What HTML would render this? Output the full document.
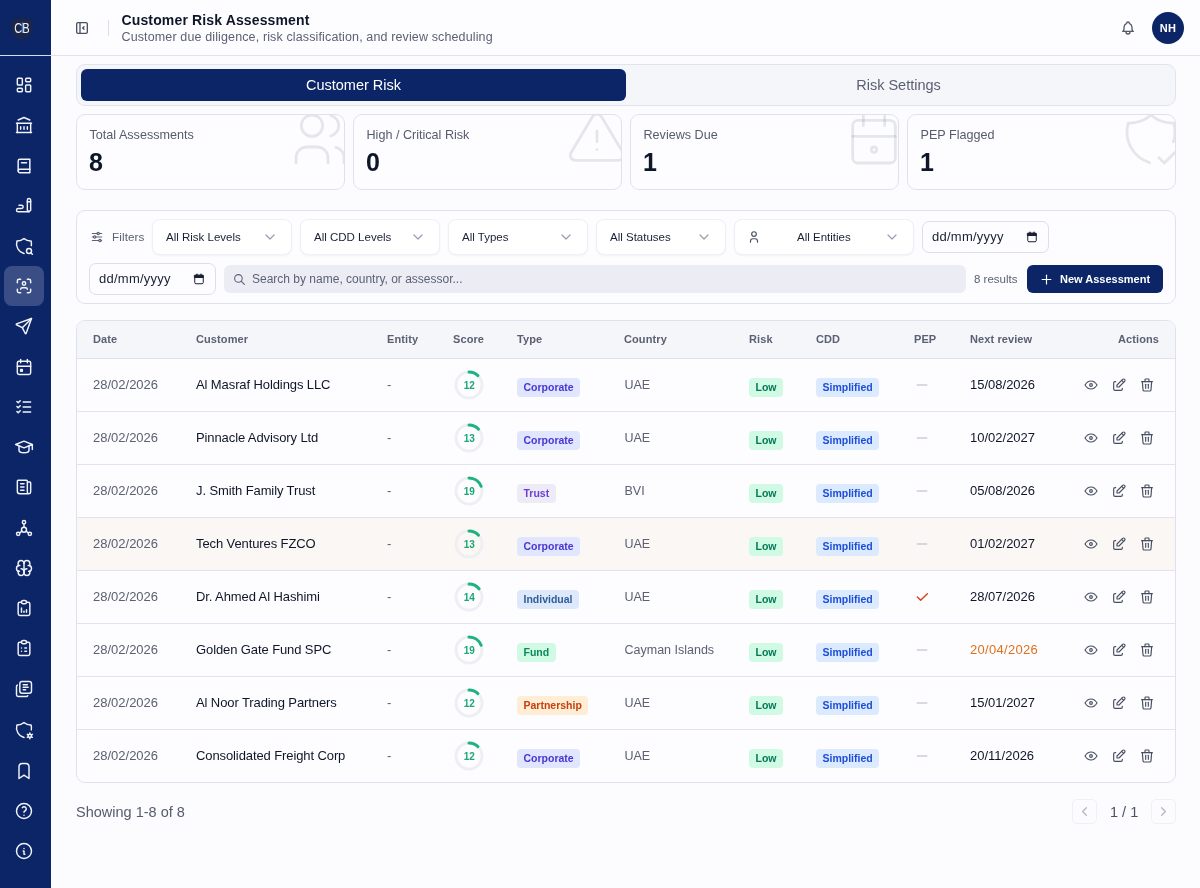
<!DOCTYPE html>
<html lang="en">
<head>
<meta charset="utf-8">
<title>Customer Risk Assessment</title>
<style>
*{box-sizing:border-box;margin:0;padding:0}
html,body{width:1200px;height:888px;overflow:hidden}
body{position:relative;background:#fcfcfe;font-family:"Liberation Sans",sans-serif;color:#0f1629;-webkit-font-smoothing:antialiased}
#app{position:absolute;left:0;top:0;width:1200px;height:888px;will-change:transform}
svg{display:block}
.ico{fill:none;stroke:currentColor;stroke-width:2;stroke-linecap:round;stroke-linejoin:round}
.abs{position:absolute}

/* ---------- sidebar ---------- */
#sidebar{position:absolute;left:0;top:0;width:51px;height:888px;background:#0b2567}
#sidebar .logo{position:absolute;left:0;top:0;width:51px;height:56px;border-bottom:1px solid #d5dbea}
#sidebar .nav{position:absolute;left:4px;width:40px;height:40px;border-radius:8px;color:#f1f3f9;display:flex;align-items:center;justify-content:center}
#sidebar .nav svg{width:20px;height:20px;stroke-width:1.750}
#sidebar .nav.active{background:#3b4d85}

/* ---------- header ---------- */
#header{position:absolute;left:51px;top:0;width:1149px;height:56px;background:#fdfdff;border-bottom:1px solid #dfe3ee}
#header .toggle{position:absolute;left:23px;top:20px;width:16px;height:16px;color:#4a5163}
#header .sep{position:absolute;left:57px;top:20px;width:1px;height:16px;background:#dcdfe8}
#header h1{position:absolute;left:70.5px;top:11px;font-size:14px;line-height:18px;font-weight:700;color:#0f1629;white-space:nowrap;letter-spacing:.14px}
#header p{position:absolute;left:70.5px;top:28.5px;font-size:12.5px;line-height:16px;color:#5b6275;white-space:nowrap;letter-spacing:.13px}
#header .bell{position:absolute;left:1069px;top:20px;width:16px;height:16px;color:#535a6b}
#header .avatar{position:absolute;left:1101px;top:12px;width:32px;height:32px;border-radius:50%;background:#0b2567;color:#fff;font-size:11px;font-weight:700;text-align:center;line-height:32px;letter-spacing:.3px}

/* ---------- tabs ---------- */
#tabs{position:absolute;left:76px;top:64px;width:1100px;height:42px;background:#f5f6fa;border:1px solid #e1e4ee;border-radius:9px}
#tabs .tab{position:absolute;top:4px;height:32px;border-radius:6px;font-size:14.5px;line-height:32px;text-align:center;color:#5a6074;font-weight:400}
#tabs .tab.on{left:4px;width:545px;background:#0b2567;color:#fff}
#tabs .tab.off{left:549px;width:545px}

/* ---------- stat cards ---------- */
.stat{position:absolute;top:114px;width:269px;height:76px;background:#fdfdff;border:1px solid #dfe2ec;border-radius:9px;overflow:hidden}
.stat .lbl{position:absolute;left:12.5px;top:12px;font-size:12.6px;line-height:16px;color:#565c6e;white-space:nowrap}
.stat .val{position:absolute;left:12px;top:31.800px;font-size:25px;line-height:30px;font-weight:700;color:#0f1629}
.stat svg{position:absolute;right:-8px;top:-8px;width:64px;height:64px;color:rgba(91,98,117,.15);stroke-width:1.050}

/* ---------- filters ---------- */
#filters{position:absolute;left:76px;top:210px;width:1100px;height:94px;background:#fdfdff;border:1px solid #dfe2ec;border-radius:9px}
#filters .ficon{position:absolute;left:13px;top:19px;width:14px;height:14px;color:#5b6275}
#filters .flabel{position:absolute;left:35px;top:19px;font-size:11.7px;letter-spacing:.1px;line-height:14px;color:#5b6275}
.sel{position:absolute;top:8px;height:36px;background:#fff;border:1px solid #eef0f6;border-radius:8px;box-shadow:0 1px 2px rgba(20,30,70,.05);font-size:11.5px;line-height:34px;color:#1a2033;padding-left:13px;white-space:nowrap}
.sel svg.chev{position:absolute;right:13px;top:9px;width:16px;height:16px;color:#9a9fae;stroke-width:1.8}
.sel svg.usr{position:absolute;left:12px;top:10px;width:14px;height:14px;color:#4a5163}
.date{position:absolute;width:127px;height:32px;background:#fdfdff;border:1px solid #dcdfea;border-radius:7px;font-size:13px;line-height:30px;color:#1a2033;padding-left:9px;letter-spacing:.25px;white-space:nowrap}
.date svg{position:absolute;right:10.500px;top:8.500px;width:12px;height:12px;color:#1a2033;stroke-width:2.400}
#search{position:absolute;left:147px;top:54px;width:742px;height:28px;background:#ecedf4;border-radius:6px;font-size:12px;line-height:28px;color:#5b6275;padding-left:28px;white-space:nowrap}
#search svg{position:absolute;left:9px;top:8px;width:13px;height:13px;color:#5b6275}
#results{position:absolute;left:897px;top:61px;font-size:11.5px;line-height:14px;color:#5b6275;white-space:nowrap}
#newbtn{position:absolute;left:950px;top:54px;width:136px;height:28px;border-radius:6px;background:#0b2567;color:#fff;font-size:11px;font-weight:700;line-height:28px;padding-left:33px;white-space:nowrap}
#newbtn svg{position:absolute;left:12px;top:6.500px;width:15px;height:15px;stroke-width:1.900}

/* ---------- table ---------- */
#table{position:absolute;left:76px;top:320px;width:1100px;height:463px;background:#fdfdff;border:1px solid #dfe2ec;border-radius:9px;overflow:hidden}
#thead{position:absolute;left:0;top:0;width:1098px;height:38px;background:#f5f6fa;border-bottom:1px solid #dfe2ec}
#thead span{position:absolute;top:11.5px;font-size:11px;line-height:13px;font-weight:700;color:#5b6072;white-space:nowrap;letter-spacing:.1px}
.row{position:absolute;left:0;width:1098px;height:53px;border-bottom:1px solid #e1e4ee}
.row.last{border-bottom:none}
.row.hov{background:#faf7f5}
.row>*{position:absolute;white-space:nowrap}
.row .d{left:16px;top:18px;font-size:13px;line-height:16px;color:#5b6072}
.row .c{left:119px;top:18px;font-size:13px;line-height:16px;color:#0f1629;letter-spacing:-.1px}
.row .e{left:310px;top:18px;font-size:13px;line-height:16px;color:#5b6072}
.row .ring{left:377px;top:11px;width:30px;height:30px}
.row .ring text{font-family:"Liberation Sans",sans-serif;font-size:10px;font-weight:700;fill:#1aa873}
.row .bdg{top:19px;height:19px;border-radius:4px;font-size:10.5px;line-height:19px;font-weight:700;padding:0 6.5px;letter-spacing:0}
.row .t{left:440px}
.row .r{left:672px;background:#d1fae5;color:#047857}
.row .k{left:739px;background:#dbeafe;color:#1d4ed8}
.corp{background:#e1e6ff;color:#4a35d3}
.trust{background:#ecebf6;color:#6b3fd4}
.indiv{background:#dde9fa;color:#2f5d99}
.fund{background:#d1fae5;color:#0a8a5a}
.part{background:#ffedd5;color:#c2410c}
.row .n{left:547.5px;top:18px;font-size:12.5px;line-height:16px;color:#5b6072}
.row .pep{left:837px;top:18px;width:16px;height:16px;color:#cbced6;stroke-width:2.300}
.row .pep.yes{color:#d6440f;stroke-width:2.100}
.row .nx{left:893px;top:18px;font-size:13px;line-height:16px;color:#0f1629}
.row .nx.due{color:#e0701c;letter-spacing:.300px}
.row .act{top:18px;width:16px;height:16px;margin-left:-1px;color:#484f61;stroke-width:1.750}
/* ---------- footer ---------- */
#showing{position:absolute;left:76px;top:803px;font-size:14.5px;line-height:18px;color:#565c6e;white-space:nowrap}
.pg{position:absolute;top:799px;width:25px;height:25px;border:1px solid #eff0f5;border-radius:5px;color:#b3b7c2}
.pg svg{position:absolute;left:4px;top:4px;width:15px;height:15px;stroke-width:2}
#pgn{position:absolute;left:1110px;top:803px;font-size:14.5px;line-height:18px;color:#4b5162;white-space:nowrap}
</style>
</head>
<body>
<div id="app">
<div id="sidebar">
  <div class="logo"><svg viewBox="0 0 51 55" width="51" height="55"><path d="M22 16.800c-3.200 1.900-6.600 2.700-10.600 2.700v8.500c0 5.600 3.700 9.400 10.600 12 6.900-2.600 10.600-6.400 10.600-12v-8.500c-4 0-7.400-.8-10.600-2.700z" fill="#1b2648"/><text x="14.300" y="33" font-family="Liberation Sans,sans-serif" font-size="15" fill="#eef0f6" textLength="15.400" lengthAdjust="spacingAndGlyphs">CB</text><rect x="21.800" y="22.300" width="1" height="10.700" fill="#4f8ff0"/></svg></div>
  <div class="nav" style="top:65.00px"><svg class="ico" viewBox="0 0 24 24"><path d="M5 4h4a1 1 0 0 1 1 1v6a1 1 0 0 1 -1 1h-4a1 1 0 0 1 -1 -1v-6a1 1 0 0 1 1 -1"/><path d="M5 16h4a1 1 0 0 1 1 1v2a1 1 0 0 1 -1 1h-4a1 1 0 0 1 -1 -1v-2a1 1 0 0 1 1 -1"/><path d="M15 12h4a1 1 0 0 1 1 1v6a1 1 0 0 1 -1 1h-4a1 1 0 0 1 -1 -1v-6a1 1 0 0 1 1 -1"/><path d="M15 4h4a1 1 0 0 1 1 1v2a1 1 0 0 1 -1 1h-4a1 1 0 0 1 -1 -1v-2a1 1 0 0 1 1 -1"/></svg></div>
  <div class="nav" style="top:105.00px"><svg class="ico" viewBox="0 0 24 24"><path d="M3 21l18 0"/><path d="M3 10l18 0"/><path d="M5 6l7 -3l7 3"/><path d="M4 10l0 11"/><path d="M20 10l0 11"/><path d="M8 14l0 3"/><path d="M12 14l0 3"/><path d="M16 14l0 3"/></svg></div>
  <div class="nav" style="top:146.00px"><svg class="ico" viewBox="0 0 24 24"><path d="M19 4v16h-12a2 2 0 0 1 -2 -2v-12a2 2 0 0 1 2 -2h12z"/><path d="M19 16h-12a2 2 0 0 0 -2 2"/><path d="M9 8l6 0"/></svg></div>
  <div class="nav" style="top:186.00px"><svg class="ico" viewBox="0 0 24 24"><path d="M20 17v-12c0 -1.121 -.879 -2 -2 -2s-2 .879 -2 2v12l2 2l2 -2z"/><path d="M16 7h4"/><path d="M18 19h-13a2 2 0 1 1 0 -4h4a2 2 0 1 0 0 -4h-3"/></svg></div>
  <div class="nav" style="top:226.00px"><svg class="ico" viewBox="0 0 24 24"><path d="M12 21a12 12 0 0 1 -8.500 -15a12 12 0 0 0 8.500 -3a12 12 0 0 0 8.500 3c.539 1.832 .627 3.747 .283 5.588"/><path d="M15 18a3 3 0 1 0 6 0a3 3 0 1 0 -6 0"/><path d="M20.200 20.200l1.800 1.800"/></svg></div>
  <div class="nav active" style="top:266.00px"><svg class="ico" viewBox="0 0 24 24"><path d="M10 9a2 2 0 1 0 4 0a2 2 0 0 0 -4 0"/><path d="M4 8v-2a2 2 0 0 1 2 -2h2"/><path d="M4 16v2a2 2 0 0 0 2 2h2"/><path d="M16 4h2a2 2 0 0 1 2 2v2"/><path d="M16 20h2a2 2 0 0 0 2 -2v-2"/><path d="M8 16a2 2 0 0 1 2 -2h4a2 2 0 0 1 2 2"/></svg></div>
  <div class="nav" style="top:306.00px"><svg class="ico" viewBox="0 0 24 24"><path d="M10 14l11 -11"/><path d="M21 3l-6.500 18a.550 .550 0 0 1 -1 0l-3.500 -7l-7 -3.500a.550 .550 0 0 1 0 -1l18 -6.500"/></svg></div>
  <div class="nav" style="top:347.00px"><svg class="ico" viewBox="0 0 24 24"><path d="M4 7a2 2 0 0 1 2 -2h12a2 2 0 0 1 2 2v12a2 2 0 0 1 -2 2h-12a2 2 0 0 1 -2 -2z"/><path d="M16 3l0 4"/><path d="M8 3l0 4"/><path d="M4 11l16 0"/><path d="M8 15h2v2h-2z"/></svg></div>
  <div class="nav" style="top:387.00px"><svg class="ico" viewBox="0 0 24 24"><path d="M3.500 5.500l1.500 1.500l2.500 -2.500"/><path d="M3.500 11.500l1.500 1.500l2.500 -2.500"/><path d="M3.500 17.500l1.500 1.500l2.500 -2.500"/><path d="M11 6l9 0"/><path d="M11 12l9 0"/><path d="M11 18l9 0"/></svg></div>
  <div class="nav" style="top:427.00px"><svg class="ico" viewBox="0 0 24 24"><path d="M22 9l-10 -4l-10 4l10 4l10 -4v6"/><path d="M6 10.600v5.400a6 3 0 0 0 12 0v-5.400"/></svg></div>
  <div class="nav" style="top:467.00px"><svg class="ico" viewBox="0 0 24 24"><path d="M16 6h3a1 1 0 0 1 1 1v11a2 2 0 0 1 -4 0v-13a1 1 0 0 0 -1 -1h-10a1 1 0 0 0 -1 1v12a3 3 0 0 0 3 3h11"/><path d="M8 8l4 0"/><path d="M8 12l4 0"/><path d="M8 16l4 0"/></svg></div>
  <div class="nav" style="top:507.50px"><svg class="ico" viewBox="0 0 24 24"><path d="M10 5a2 2 0 1 0 4 0a2 2 0 1 0 -4 0"/><path d="M3 19a2 2 0 1 0 4 0a2 2 0 1 0 -4 0"/><path d="M17 19a2 2 0 1 0 4 0a2 2 0 1 0 -4 0"/><path d="M9 14a3 3 0 1 0 6 0a3 3 0 1 0 -6 0"/><path d="M12 7l0 4"/><path d="M6.700 17.800l2.800 -2"/><path d="M17.300 17.800l-2.800 -2"/></svg></div>
  <div class="nav" style="top:548.00px"><svg class="ico" viewBox="0 0 24 24"><path d="M15.500 13a3.500 3.500 0 0 0 -3.500 3.500v1a3.500 3.500 0 0 0 7 0v-1.800"/><path d="M8.500 13a3.500 3.500 0 0 1 3.500 3.500v1a3.500 3.500 0 0 1 -7 0v-1.800"/><path d="M17.500 16a3.500 3.500 0 0 0 0 -7h-.500"/><path d="M19 9.300v-2.800a3.500 3.500 0 0 0 -7 0"/><path d="M6.500 16a3.500 3.500 0 0 1 0 -7h.500"/><path d="M5 9.300v-2.800a3.500 3.500 0 0 1 7 0v10"/></svg></div>
  <div class="nav" style="top:588.00px"><svg class="ico" viewBox="0 0 24 24"><path d="M9 5h-2a2 2 0 0 0 -2 2v12a2 2 0 0 0 2 2h10a2 2 0 0 0 2 -2v-12a2 2 0 0 0 -2 -2h-2"/><path d="M9 5a2 2 0 0 1 2 -2h2a2 2 0 0 1 2 2a2 2 0 0 1 -2 2h-2a2 2 0 0 1 -2 -2z"/><path d="M9 17v-5"/><path d="M12 17v-1"/><path d="M15 17v-3"/></svg></div>
  <div class="nav" style="top:628.00px"><svg class="ico" viewBox="0 0 24 24"><path d="M9 5h-2a2 2 0 0 0 -2 2v12a2 2 0 0 0 2 2h10a2 2 0 0 0 2 -2v-12a2 2 0 0 0 -2 -2h-2"/><path d="M9 5a2 2 0 0 1 2 -2h2a2 2 0 0 1 2 2a2 2 0 0 1 -2 2h-2a2 2 0 0 1 -2 -2z"/><path d="M9 12l.010 0"/><path d="M13 12l2 0"/><path d="M9 16l.010 0"/><path d="M13 16l2 0"/></svg></div>
  <div class="nav" style="top:669.00px"><svg class="ico" viewBox="0 0 24 24"><path d="M7 5.667a2.667 2.667 0 0 1 2.667 -2.667h8.666a2.667 2.667 0 0 1 2.667 2.667v8.666a2.667 2.667 0 0 1 -2.667 2.667h-8.666a2.667 2.667 0 0 1 -2.667 -2.667z"/><path d="M4.012 7.260a2.005 2.005 0 0 0 -1.012 1.737v10c0 1.100 .900 2 2 2h10c.750 0 1.158 -.385 1.500 -1"/><path d="M11 7h5"/><path d="M11 10h6"/><path d="M11 13h3"/></svg></div>
  <div class="nav" style="top:710.00px"><svg class="ico" viewBox="0 0 24 24"><path d="M12 21a12 12 0 0 1 -8.500 -15a12 12 0 0 0 8.500 -3a12 12 0 0 0 8.500 3c.568 1.933 .635 3.957 .223 5.890"/><path d="M17 19a2 2 0 1 0 4 0a2 2 0 1 0 -4 0"/><path d="M19 15.500v1.500"/><path d="M19 21v1.500"/><path d="M22.032 17.250l-1.299 .750"/><path d="M17.270 20l-1.300 .750"/><path d="M15.970 17.250l1.300 .750"/><path d="M20.733 20l1.300 .750"/></svg></div>
  <div class="nav" style="top:751.00px"><svg class="ico" viewBox="0 0 24 24"><path d="M18 7v14l-6 -4l-6 4v-14a4 4 0 0 1 4 -4h4a4 4 0 0 1 4 4z"/></svg></div>
  <div class="nav" style="top:791.00px"><svg class="ico" viewBox="0 0 24 24"><path d="M3 12a9 9 0 1 0 18 0a9 9 0 1 0 -18 0"/><path d="M12 17l0 .010"/><path d="M12 13.500a1.500 1.500 0 0 1 1 -1.500a2.600 2.600 0 1 0 -3 -4"/></svg></div>
  <div class="nav" style="top:831.00px"><svg class="ico" viewBox="0 0 24 24"><path d="M3 12a9 9 0 1 0 18 0a9 9 0 0 0 -18 0"/><path d="M12 9h.010"/><path d="M11 12h1v4h1"/></svg></div>
</div>

<div id="header">
  <svg class="ico toggle" viewBox="0 0 24 24"><path d="M4 6a2 2 0 0 1 2 -2h12a2 2 0 0 1 2 2v12a2 2 0 0 1 -2 2h-12a2 2 0 0 1 -2 -2z"/><path d="M9 4v16"/><path d="M15 10l-2 2l2 2"/></svg>
  <div class="sep"></div>
  <h1>Customer Risk Assessment</h1>
  <p>Customer due diligence, risk classification, and review scheduling</p>
  <svg class="ico bell" viewBox="0 0 24 24"><path d="M10 5a2 2 0 1 1 4 0a7 7 0 0 1 4 6v3a4 4 0 0 0 2 3h-16a4 4 0 0 0 2 -3v-3a7 7 0 0 1 4 -6"/><path d="M9 17v1a3 3 0 0 0 6 0v-1"/></svg>
  <div class="avatar">NH</div>
</div>

<div id="tabs">
  <div class="tab on">Customer Risk</div>
  <div class="tab off">Risk Settings</div>
</div>

<div class="stat" style="left:76px"><div class="lbl">Total Assessments</div><div class="val">8</div><svg class="ico" viewBox="0 0 24 24"><path d="M5 7a4 4 0 1 0 8 0a4 4 0 1 0 -8 0"/><path d="M3 21v-2a4 4 0 0 1 4 -4h4a4 4 0 0 1 4 4v2"/><path d="M16 3.130a4 4 0 0 1 0 7.750"/><path d="M21 21v-2a4 4 0 0 0 -3 -3.850"/></svg></div>
<div class="stat" style="left:353px"><div class="lbl">High / Critical Risk</div><div class="val">0</div><svg class="ico" viewBox="0 0 24 24"><path d="M12 9v4"/><path d="M10.363 3.591l-8.106 13.534a1.914 1.914 0 0 0 1.636 2.871h16.214a1.914 1.914 0 0 0 1.636 -2.870l-8.106 -13.536a1.914 1.914 0 0 0 -3.274 0z"/><path d="M12 16h.010"/></svg></div>
<div class="stat" style="left:630px"><div class="lbl">Reviews Due</div><div class="val">1</div><svg class="ico" viewBox="0 0 24 24"><path d="M4 7a2 2 0 0 1 2 -2h12a2 2 0 0 1 2 2v12a2 2 0 0 1 -2 2h-12a2 2 0 0 1 -2 -2z"/><path d="M16 3v4"/><path d="M8 3v4"/><path d="M4 11h16"/><path d="M11 16a1 1 0 1 0 2 0a1 1 0 1 0 -2 0"/></svg></div>
<div class="stat" style="left:907px"><div class="lbl">PEP Flagged</div><div class="val">1</div><svg class="ico" viewBox="0 0 24 24"><path d="M11.460 20.846a12 12 0 0 1 -7.960 -14.846a12 12 0 0 0 8.500 -3a12 12 0 0 0 8.500 3a12 12 0 0 1 -.090 7.060"/><path d="M15 19l2 2l4 -4"/></svg></div>

<div id="filters">
  <svg class="ico ficon" viewBox="0 0 24 24"><path d="M12 6a2 2 0 1 0 4 0a2 2 0 1 0 -4 0"/><path d="M4 6l8 0"/><path d="M16 6l4 0"/><path d="M6 12a2 2 0 1 0 4 0a2 2 0 1 0 -4 0"/><path d="M4 12l2 0"/><path d="M10 12l10 0"/><path d="M15 18a2 2 0 1 0 4 0a2 2 0 1 0 -4 0"/><path d="M4 18l11 0"/><path d="M19 18l1 0"/></svg>
  <div class="flabel">Filters</div>
  <div class="sel" style="left:75px;width:140px">All Risk Levels<svg class="ico chev" viewBox="0 0 24 24"><path d="M6 9l6 6l6 -6"/></svg></div>
  <div class="sel" style="left:223px;width:140px">All CDD Levels<svg class="ico chev" viewBox="0 0 24 24"><path d="M6 9l6 6l6 -6"/></svg></div>
  <div class="sel" style="left:371px;width:140px">All Types<svg class="ico chev" viewBox="0 0 24 24"><path d="M6 9l6 6l6 -6"/></svg></div>
  <div class="sel" style="left:519px;width:130px">All Statuses<svg class="ico chev" viewBox="0 0 24 24"><path d="M6 9l6 6l6 -6"/></svg></div>
  <div class="sel" style="left:657px;width:180px;padding-left:62px"><svg class="ico usr" viewBox="0 0 24 24"><path d="M8 7a4 4 0 1 0 8 0a4 4 0 0 0 -8 0"/><path d="M6 21v-2a4 4 0 0 1 4 -4h4a4 4 0 0 1 4 4v2"/></svg>All Entities<svg class="ico chev" viewBox="0 0 24 24"><path d="M6 9l6 6l6 -6"/></svg></div>
  <div class="date" style="left:845px;top:10px">dd/mm/yyyy<svg class="ico" viewBox="0 0 24 24"><rect x="3.500" y="4.500" width="17" height="17" rx="2.500" stroke-width="2"/><path d="M3.500 4.500h17v4.500h-17z" fill="currentColor" stroke-width="2"/><path d="M8 2.200v2M16 2.200v2" stroke-width="2.600"/></svg></div>
  <div class="date" style="left:12px;top:52px">dd/mm/yyyy<svg class="ico" viewBox="0 0 24 24"><rect x="3.500" y="4.500" width="17" height="17" rx="2.500" stroke-width="2"/><path d="M3.500 4.500h17v4.500h-17z" fill="currentColor" stroke-width="2"/><path d="M8 2.200v2M16 2.200v2" stroke-width="2.600"/></svg></div>
  <div id="search"><svg class="ico" viewBox="0 0 24 24"><path d="M3 10a7 7 0 1 0 14 0a7 7 0 1 0 -14 0"/><path d="M21 21l-6 -6"/></svg>Search by name, country, or assessor...</div>
  <div id="results">8 results</div>
  <div id="newbtn"><svg class="ico" viewBox="0 0 24 24"><path d="M12 5l0 14"/><path d="M5 12l14 0"/></svg>New Assessment</div>
</div>

<div id="table">
 <div id="thead"><span style="left:16px">Date</span><span style="left:119px">Customer</span><span style="left:310px">Entity</span><span style="left:376px">Score</span><span style="left:440px">Type</span><span style="left:547px">Country</span><span style="left:672px">Risk</span><span style="left:739px">CDD</span><span style="left:837px">PEP</span><span style="left:893px">Next review</span><span style="right:16px">Actions</span></div>
 <div class="row" style="top:38px"><span class="d">28/02/2026</span><span class="c">Al Masraf Holdings LLC</span><span class="e">-</span><svg class="ring" viewBox="0 0 30 30"><circle cx="15" cy="15" r="13" fill="none" stroke="#eeeff3" stroke-width="3"/><circle cx="15" cy="15" r="13" fill="none" stroke="#1db37c" stroke-width="3" stroke-linecap="round" stroke-dasharray="9.80 81.68" transform="rotate(-90 15 15)"/><text x="15.200" y="18.600" text-anchor="middle">12</text></svg><span class="bdg t corp">Corporate</span><span class="n">UAE</span><span class="bdg r">Low</span><span class="bdg k">Simplified</span><svg class="ico pep" viewBox="0 0 24 24"><path d="M5 12l14 0"/></svg><span class="nx">15/08/2026</span><svg class="ico act" style="left:1007px" viewBox="0 0 24 24"><path d="M10 12a2 2 0 1 0 4 0a2 2 0 0 0 -4 0"/><path d="M21 12c-2.400 4 -5.400 6 -9 6c-3.600 0 -6.600 -2 -9 -6c2.400 -4 5.400 -6 9 -6c3.600 0 6.600 2 9 6"/></svg><svg class="ico act" style="left:1035px" viewBox="0 0 24 24"><path d="M7 7h-1a2 2 0 0 0 -2 2v9a2 2 0 0 0 2 2h9a2 2 0 0 0 2 -2v-1"/><path d="M20.385 6.585a2.100 2.100 0 0 0 -2.970 -2.970l-8.415 8.385v3h3l8.385 -8.415z"/><path d="M16 5l3 3"/></svg><svg class="ico act" style="left:1063px" viewBox="0 0 24 24"><path d="M4 7l16 0"/><path d="M10 11l0 6"/><path d="M14 11l0 6"/><path d="M5 7l1 12a2 2 0 0 0 2 2h8a2 2 0 0 0 2 -2l1 -12"/><path d="M9 7v-3a1 1 0 0 1 1 -1h4a1 1 0 0 1 1 1v3"/></svg></div>
 <div class="row" style="top:91px"><span class="d">28/02/2026</span><span class="c">Pinnacle Advisory Ltd</span><span class="e">-</span><svg class="ring" viewBox="0 0 30 30"><circle cx="15" cy="15" r="13" fill="none" stroke="#eeeff3" stroke-width="3"/><circle cx="15" cy="15" r="13" fill="none" stroke="#1db37c" stroke-width="3" stroke-linecap="round" stroke-dasharray="10.62 81.68" transform="rotate(-90 15 15)"/><text x="15.200" y="18.600" text-anchor="middle">13</text></svg><span class="bdg t corp">Corporate</span><span class="n">UAE</span><span class="bdg r">Low</span><span class="bdg k">Simplified</span><svg class="ico pep" viewBox="0 0 24 24"><path d="M5 12l14 0"/></svg><span class="nx">10/02/2027</span><svg class="ico act" style="left:1007px" viewBox="0 0 24 24"><path d="M10 12a2 2 0 1 0 4 0a2 2 0 0 0 -4 0"/><path d="M21 12c-2.400 4 -5.400 6 -9 6c-3.600 0 -6.600 -2 -9 -6c2.400 -4 5.400 -6 9 -6c3.600 0 6.600 2 9 6"/></svg><svg class="ico act" style="left:1035px" viewBox="0 0 24 24"><path d="M7 7h-1a2 2 0 0 0 -2 2v9a2 2 0 0 0 2 2h9a2 2 0 0 0 2 -2v-1"/><path d="M20.385 6.585a2.100 2.100 0 0 0 -2.970 -2.970l-8.415 8.385v3h3l8.385 -8.415z"/><path d="M16 5l3 3"/></svg><svg class="ico act" style="left:1063px" viewBox="0 0 24 24"><path d="M4 7l16 0"/><path d="M10 11l0 6"/><path d="M14 11l0 6"/><path d="M5 7l1 12a2 2 0 0 0 2 2h8a2 2 0 0 0 2 -2l1 -12"/><path d="M9 7v-3a1 1 0 0 1 1 -1h4a1 1 0 0 1 1 1v3"/></svg></div>
 <div class="row" style="top:144px"><span class="d">28/02/2026</span><span class="c">J. Smith Family Trust</span><span class="e">-</span><svg class="ring" viewBox="0 0 30 30"><circle cx="15" cy="15" r="13" fill="none" stroke="#eeeff3" stroke-width="3"/><circle cx="15" cy="15" r="13" fill="none" stroke="#1db37c" stroke-width="3" stroke-linecap="round" stroke-dasharray="15.52 81.68" transform="rotate(-90 15 15)"/><text x="15.200" y="18.600" text-anchor="middle">19</text></svg><span class="bdg t trust">Trust</span><span class="n">BVI</span><span class="bdg r">Low</span><span class="bdg k">Simplified</span><svg class="ico pep" viewBox="0 0 24 24"><path d="M5 12l14 0"/></svg><span class="nx">05/08/2026</span><svg class="ico act" style="left:1007px" viewBox="0 0 24 24"><path d="M10 12a2 2 0 1 0 4 0a2 2 0 0 0 -4 0"/><path d="M21 12c-2.400 4 -5.400 6 -9 6c-3.600 0 -6.600 -2 -9 -6c2.400 -4 5.400 -6 9 -6c3.600 0 6.600 2 9 6"/></svg><svg class="ico act" style="left:1035px" viewBox="0 0 24 24"><path d="M7 7h-1a2 2 0 0 0 -2 2v9a2 2 0 0 0 2 2h9a2 2 0 0 0 2 -2v-1"/><path d="M20.385 6.585a2.100 2.100 0 0 0 -2.970 -2.970l-8.415 8.385v3h3l8.385 -8.415z"/><path d="M16 5l3 3"/></svg><svg class="ico act" style="left:1063px" viewBox="0 0 24 24"><path d="M4 7l16 0"/><path d="M10 11l0 6"/><path d="M14 11l0 6"/><path d="M5 7l1 12a2 2 0 0 0 2 2h8a2 2 0 0 0 2 -2l1 -12"/><path d="M9 7v-3a1 1 0 0 1 1 -1h4a1 1 0 0 1 1 1v3"/></svg></div>
 <div class="row hov" style="top:197px"><span class="d">28/02/2026</span><span class="c">Tech Ventures FZCO</span><span class="e">-</span><svg class="ring" viewBox="0 0 30 30"><circle cx="15" cy="15" r="13" fill="none" stroke="#eeeff3" stroke-width="3"/><circle cx="15" cy="15" r="13" fill="none" stroke="#1db37c" stroke-width="3" stroke-linecap="round" stroke-dasharray="10.62 81.68" transform="rotate(-90 15 15)"/><text x="15.200" y="18.600" text-anchor="middle">13</text></svg><span class="bdg t corp">Corporate</span><span class="n">UAE</span><span class="bdg r">Low</span><span class="bdg k">Simplified</span><svg class="ico pep" viewBox="0 0 24 24"><path d="M5 12l14 0"/></svg><span class="nx">01/02/2027</span><svg class="ico act" style="left:1007px" viewBox="0 0 24 24"><path d="M10 12a2 2 0 1 0 4 0a2 2 0 0 0 -4 0"/><path d="M21 12c-2.400 4 -5.400 6 -9 6c-3.600 0 -6.600 -2 -9 -6c2.400 -4 5.400 -6 9 -6c3.600 0 6.600 2 9 6"/></svg><svg class="ico act" style="left:1035px" viewBox="0 0 24 24"><path d="M7 7h-1a2 2 0 0 0 -2 2v9a2 2 0 0 0 2 2h9a2 2 0 0 0 2 -2v-1"/><path d="M20.385 6.585a2.100 2.100 0 0 0 -2.970 -2.970l-8.415 8.385v3h3l8.385 -8.415z"/><path d="M16 5l3 3"/></svg><svg class="ico act" style="left:1063px" viewBox="0 0 24 24"><path d="M4 7l16 0"/><path d="M10 11l0 6"/><path d="M14 11l0 6"/><path d="M5 7l1 12a2 2 0 0 0 2 2h8a2 2 0 0 0 2 -2l1 -12"/><path d="M9 7v-3a1 1 0 0 1 1 -1h4a1 1 0 0 1 1 1v3"/></svg></div>
 <div class="row" style="top:250px"><span class="d">28/02/2026</span><span class="c">Dr. Ahmed Al Hashimi</span><span class="e">-</span><svg class="ring" viewBox="0 0 30 30"><circle cx="15" cy="15" r="13" fill="none" stroke="#eeeff3" stroke-width="3"/><circle cx="15" cy="15" r="13" fill="none" stroke="#1db37c" stroke-width="3" stroke-linecap="round" stroke-dasharray="11.44 81.68" transform="rotate(-90 15 15)"/><text x="15.200" y="18.600" text-anchor="middle">14</text></svg><span class="bdg t indiv">Individual</span><span class="n">UAE</span><span class="bdg r">Low</span><span class="bdg k">Simplified</span><svg class="ico pep yes" viewBox="0 0 24 24"><path d="M5 12l5 5l10 -10"/></svg><span class="nx">28/07/2026</span><svg class="ico act" style="left:1007px" viewBox="0 0 24 24"><path d="M10 12a2 2 0 1 0 4 0a2 2 0 0 0 -4 0"/><path d="M21 12c-2.400 4 -5.400 6 -9 6c-3.600 0 -6.600 -2 -9 -6c2.400 -4 5.400 -6 9 -6c3.600 0 6.600 2 9 6"/></svg><svg class="ico act" style="left:1035px" viewBox="0 0 24 24"><path d="M7 7h-1a2 2 0 0 0 -2 2v9a2 2 0 0 0 2 2h9a2 2 0 0 0 2 -2v-1"/><path d="M20.385 6.585a2.100 2.100 0 0 0 -2.970 -2.970l-8.415 8.385v3h3l8.385 -8.415z"/><path d="M16 5l3 3"/></svg><svg class="ico act" style="left:1063px" viewBox="0 0 24 24"><path d="M4 7l16 0"/><path d="M10 11l0 6"/><path d="M14 11l0 6"/><path d="M5 7l1 12a2 2 0 0 0 2 2h8a2 2 0 0 0 2 -2l1 -12"/><path d="M9 7v-3a1 1 0 0 1 1 -1h4a1 1 0 0 1 1 1v3"/></svg></div>
 <div class="row" style="top:303px"><span class="d">28/02/2026</span><span class="c">Golden Gate Fund SPC</span><span class="e">-</span><svg class="ring" viewBox="0 0 30 30"><circle cx="15" cy="15" r="13" fill="none" stroke="#eeeff3" stroke-width="3"/><circle cx="15" cy="15" r="13" fill="none" stroke="#1db37c" stroke-width="3" stroke-linecap="round" stroke-dasharray="15.52 81.68" transform="rotate(-90 15 15)"/><text x="15.200" y="18.600" text-anchor="middle">19</text></svg><span class="bdg t fund">Fund</span><span class="n">Cayman Islands</span><span class="bdg r">Low</span><span class="bdg k">Simplified</span><svg class="ico pep" viewBox="0 0 24 24"><path d="M5 12l14 0"/></svg><span class="nx due">20/04/2026</span><svg class="ico act" style="left:1007px" viewBox="0 0 24 24"><path d="M10 12a2 2 0 1 0 4 0a2 2 0 0 0 -4 0"/><path d="M21 12c-2.400 4 -5.400 6 -9 6c-3.600 0 -6.600 -2 -9 -6c2.400 -4 5.400 -6 9 -6c3.600 0 6.600 2 9 6"/></svg><svg class="ico act" style="left:1035px" viewBox="0 0 24 24"><path d="M7 7h-1a2 2 0 0 0 -2 2v9a2 2 0 0 0 2 2h9a2 2 0 0 0 2 -2v-1"/><path d="M20.385 6.585a2.100 2.100 0 0 0 -2.970 -2.970l-8.415 8.385v3h3l8.385 -8.415z"/><path d="M16 5l3 3"/></svg><svg class="ico act" style="left:1063px" viewBox="0 0 24 24"><path d="M4 7l16 0"/><path d="M10 11l0 6"/><path d="M14 11l0 6"/><path d="M5 7l1 12a2 2 0 0 0 2 2h8a2 2 0 0 0 2 -2l1 -12"/><path d="M9 7v-3a1 1 0 0 1 1 -1h4a1 1 0 0 1 1 1v3"/></svg></div>
 <div class="row" style="top:356px"><span class="d">28/02/2026</span><span class="c">Al Noor Trading Partners</span><span class="e">-</span><svg class="ring" viewBox="0 0 30 30"><circle cx="15" cy="15" r="13" fill="none" stroke="#eeeff3" stroke-width="3"/><circle cx="15" cy="15" r="13" fill="none" stroke="#1db37c" stroke-width="3" stroke-linecap="round" stroke-dasharray="9.80 81.68" transform="rotate(-90 15 15)"/><text x="15.200" y="18.600" text-anchor="middle">12</text></svg><span class="bdg t part">Partnership</span><span class="n">UAE</span><span class="bdg r">Low</span><span class="bdg k">Simplified</span><svg class="ico pep" viewBox="0 0 24 24"><path d="M5 12l14 0"/></svg><span class="nx">15/01/2027</span><svg class="ico act" style="left:1007px" viewBox="0 0 24 24"><path d="M10 12a2 2 0 1 0 4 0a2 2 0 0 0 -4 0"/><path d="M21 12c-2.400 4 -5.400 6 -9 6c-3.600 0 -6.600 -2 -9 -6c2.400 -4 5.400 -6 9 -6c3.600 0 6.600 2 9 6"/></svg><svg class="ico act" style="left:1035px" viewBox="0 0 24 24"><path d="M7 7h-1a2 2 0 0 0 -2 2v9a2 2 0 0 0 2 2h9a2 2 0 0 0 2 -2v-1"/><path d="M20.385 6.585a2.100 2.100 0 0 0 -2.970 -2.970l-8.415 8.385v3h3l8.385 -8.415z"/><path d="M16 5l3 3"/></svg><svg class="ico act" style="left:1063px" viewBox="0 0 24 24"><path d="M4 7l16 0"/><path d="M10 11l0 6"/><path d="M14 11l0 6"/><path d="M5 7l1 12a2 2 0 0 0 2 2h8a2 2 0 0 0 2 -2l1 -12"/><path d="M9 7v-3a1 1 0 0 1 1 -1h4a1 1 0 0 1 1 1v3"/></svg></div>
 <div class="row last" style="top:409px"><span class="d">28/02/2026</span><span class="c">Consolidated Freight Corp</span><span class="e">-</span><svg class="ring" viewBox="0 0 30 30"><circle cx="15" cy="15" r="13" fill="none" stroke="#eeeff3" stroke-width="3"/><circle cx="15" cy="15" r="13" fill="none" stroke="#1db37c" stroke-width="3" stroke-linecap="round" stroke-dasharray="9.80 81.68" transform="rotate(-90 15 15)"/><text x="15.200" y="18.600" text-anchor="middle">12</text></svg><span class="bdg t corp">Corporate</span><span class="n">UAE</span><span class="bdg r">Low</span><span class="bdg k">Simplified</span><svg class="ico pep" viewBox="0 0 24 24"><path d="M5 12l14 0"/></svg><span class="nx">20/11/2026</span><svg class="ico act" style="left:1007px" viewBox="0 0 24 24"><path d="M10 12a2 2 0 1 0 4 0a2 2 0 0 0 -4 0"/><path d="M21 12c-2.400 4 -5.400 6 -9 6c-3.600 0 -6.600 -2 -9 -6c2.400 -4 5.400 -6 9 -6c3.600 0 6.600 2 9 6"/></svg><svg class="ico act" style="left:1035px" viewBox="0 0 24 24"><path d="M7 7h-1a2 2 0 0 0 -2 2v9a2 2 0 0 0 2 2h9a2 2 0 0 0 2 -2v-1"/><path d="M20.385 6.585a2.100 2.100 0 0 0 -2.970 -2.970l-8.415 8.385v3h3l8.385 -8.415z"/><path d="M16 5l3 3"/></svg><svg class="ico act" style="left:1063px" viewBox="0 0 24 24"><path d="M4 7l16 0"/><path d="M10 11l0 6"/><path d="M14 11l0 6"/><path d="M5 7l1 12a2 2 0 0 0 2 2h8a2 2 0 0 0 2 -2l1 -12"/><path d="M9 7v-3a1 1 0 0 1 1 -1h4a1 1 0 0 1 1 1v3"/></svg></div>
</div>

<div id="showing">Showing 1-8 of 8</div>
<div class="pg" style="left:1072px"><svg class="ico" viewBox="0 0 24 24"><path d="M15 6l-6 6l6 6"/></svg></div>
<div id="pgn">1 / 1</div>
<div class="pg" style="left:1151px"><svg class="ico" viewBox="0 0 24 24"><path d="M9 6l6 6l-6 6"/></svg></div>
</div>
</body>
</html>
